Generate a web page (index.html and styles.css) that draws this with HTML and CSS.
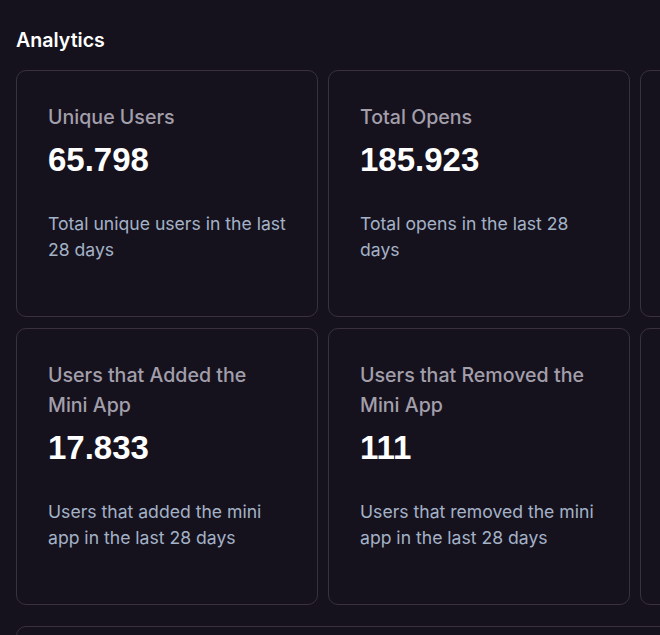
FILE: index.html
```html
<!DOCTYPE html>
<html>
<head>
<meta charset="utf-8">
<link rel="stylesheet" href="styles.css">
</head>
<body>
<div class="page">
  <h2 class="title">Analytics</h2>
  <div class="grid">
    <div class="card">
      <div class="label">Unique Users</div>
      <div class="value">65.798</div>
      <div class="desc">Total unique users in the last 28 days</div>
    </div>
    <div class="card">
      <div class="label">Total Opens</div>
      <div class="value">185.923</div>
      <div class="desc">Total opens in the last 28 days</div>
    </div>
    <div class="card card-edge"></div>
    <div class="card">
      <div class="label">Users that Added the Mini App</div>
      <div class="value">17.833</div>
      <div class="desc">Users that added the mini app in the last 28 days</div>
    </div>
    <div class="card">
      <div class="label">Users that Removed the Mini App</div>
      <div class="value">111</div>
      <div class="desc">Users that removed the mini app in the last 28 days</div>
    </div>
    <div class="card card-edge"></div>
  </div>
  <div class="wide-card"></div>
</div>
</body>
</html>
```
FILE: styles.css
```css
html, body {
  margin: 0;
  padding: 0;
  background: #16121d;
  overflow: hidden;
}
.page {
  padding: 26px 0 0 16px;
  font-family: Inter, "Noto Sans", sans-serif;
  width: 1000px;
}
.title {
  margin: 0 0 16px 0;
  font-size: 19.6px;
  line-height: 28px;
  font-weight: 600;
  color: #ffffff;
}
.grid {
  display: grid;
  grid-template-columns: repeat(3, 302px);
  column-gap: 10px;
  row-gap: 11px;
}
.card {
  border: 1px solid #3a3040;
  border-radius: 10px;
  padding: 31px 31px 53px 31px;
  background: #16121d;
}
.label {
  font-size: 19.6px;
  line-height: 30px;
  font-weight: 500;
  color: #a29fab;
}
.value {
  margin-top: 10px;
  font-family: "Liberation Sans", Arial, sans-serif;
  font-weight: 700;
  font-size: 33px;
  line-height: 36px;
  color: #ffffff;
}
.desc {
  margin-top: 33px;
  font-size: 17.6px;
  line-height: 26px;
  color: #a4b2c8;
}
.wide-card {
  margin-top: 21px;
  height: 100px;
  border: 1px solid #3a3040;
  border-radius: 10px;
}
```
